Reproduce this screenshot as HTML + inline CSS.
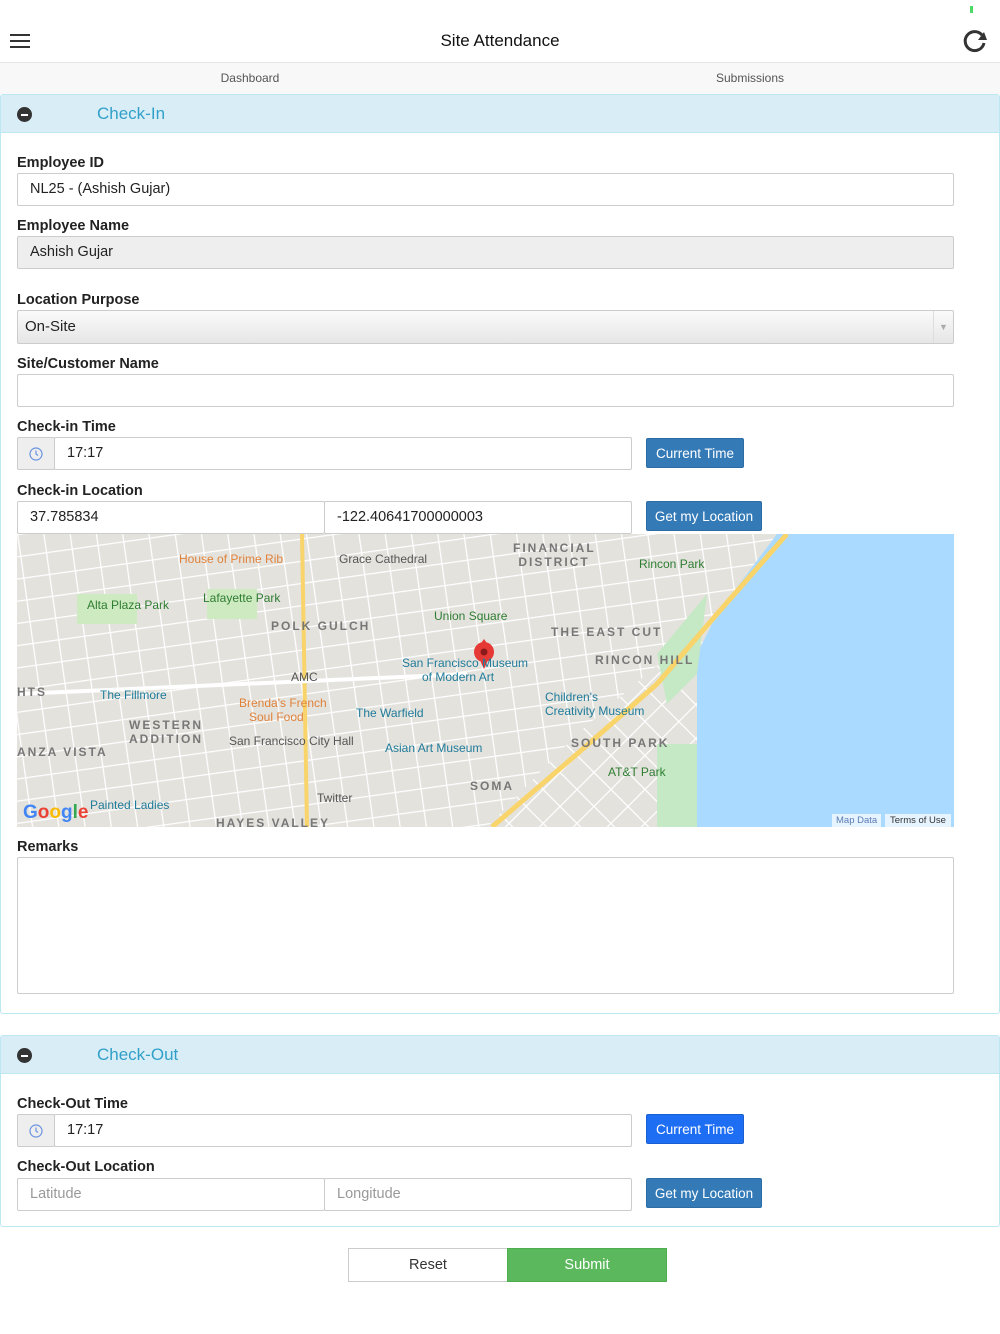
<!DOCTYPE html>
<html><head><meta charset="utf-8"><style>
*{box-sizing:border-box;margin:0;padding:0}
body{width:1000px;height:1334px;background:#fff;font-family:"Liberation Sans",sans-serif;position:relative;overflow:hidden;color:#333}
.a{position:absolute}
.lbl{position:absolute;left:17px;font-weight:bold;font-size:14.5px;color:#222}
.inp{position:absolute;height:33px;border:1px solid #ccc;background:#fff;font-size:14.5px;padding:0 12px;line-height:31px;color:#222;border-radius:2px}
.btn{position:absolute;height:30px;background:#337ab7;color:#fff;font-size:13.5px;text-align:center;line-height:30px;border-radius:2px;border:1px solid #2e6da4}
.panel{position:absolute;left:0;width:1000px;border:1px solid #bce8f1;border-radius:3px}
.ph{position:absolute;left:0;top:0;width:998px;height:38px;background:#d9edf7;border-bottom:1px solid #bce8f1}
.ph span{position:absolute;left:96px;top:9px;font-size:17px;color:#31a0c8}
.ph i{position:absolute;left:16px;top:12px;width:15px;height:15px;border-radius:50%;background:#333}
.ph i:after{content:"";position:absolute;left:4px;top:6.5px;width:7px;height:2px;background:#fff}
.ml{position:absolute;font-size:12px;color:#555}
</style></head><body>
<div class="a" style="left:970px;top:6px;width:3px;height:7px;background:#4cd964"></div>
<div class="a" style="left:10px;top:34px;width:20px;height:2px;background:#333"></div>
<div class="a" style="left:10px;top:40px;width:20px;height:2px;background:#333"></div>
<div class="a" style="left:10px;top:46px;width:20px;height:2px;background:#333"></div>
<div class="a" style="left:0;top:31px;width:1000px;text-align:center;font-size:17px;color:#111">Site Attendance</div>
<svg class="a" style="left:961px;top:28px" width="28" height="26" viewBox="0 0 28 26"><path d="M21 7 A9.5 9.5 0 1 0 23 15" fill="none" stroke="#333" stroke-width="3"/><path d="M17 12 L26 12 L23 4 Z" fill="#333"/></svg>
<div class="a" style="left:0;top:62px;width:1000px;height:32px;background:#f8f8f8;border-top:1px solid #e5e5e5"></div>
<div class="a" style="left:0;top:71px;width:500px;text-align:center;font-size:12px;color:#555">Dashboard</div>
<div class="a" style="left:500px;top:71px;width:500px;text-align:center;font-size:12px;color:#555">Submissions</div>

<div class="panel" style="top:94px;height:920px"><div class="ph"><i></i><span>Check-In</span></div></div>
<div class="lbl" style="top:155px">Employee ID</div>
<div class="inp" style="left:17px;top:173px;width:937px">NL25 - (Ashish Gujar)</div>
<div class="lbl" style="top:218px">Employee Name</div>
<div class="inp" style="left:17px;top:236px;width:937px;background:#eee">Ashish Gujar</div>
<div class="lbl" style="top:292px">Location Purpose</div>
<div class="inp" style="left:17px;top:310px;width:937px;background:linear-gradient(#fafafa,#e6e6e6);padding-left:7px;height:34px;line-height:32px;font-size:15px">On-Site<span style="position:absolute;right:0;top:0;width:20px;height:32px;border-left:1px solid #ddd;font-size:9px;color:#aaa;text-align:center">▼</span></div>
<div class="lbl" style="top:356px">Site/Customer Name</div>
<div class="inp" style="left:17px;top:374px;width:937px"></div>
<div class="lbl" style="top:419px">Check-in Time</div>
<div class="inp" style="left:17px;top:437px;width:38px;background:#eee;padding:0"><svg style="position:absolute;left:11px;top:9px" width="14" height="14"><circle cx="7" cy="7" r="6" fill="none" stroke="#6a93e0" stroke-width="1.2"/><path d="M7 3.5V7L9 8.5" stroke="#6a93e0" fill="none" stroke-width="1.2"/></svg></div>
<div class="inp" style="left:54px;top:437px;width:578px">17:17</div>
<div class="btn" style="left:646px;top:438px;width:98px">Current Time</div>
<div class="lbl" style="top:483px">Check-in Location</div>
<div class="inp" style="left:17px;top:501px;width:308px">37.785834</div>
<div class="inp" style="left:324px;top:501px;width:308px">-122.40641700000003</div>
<div class="btn" style="left:646px;top:501px;width:116px">Get my Location</div>

<div class="a" style="left:17px;top:534px;width:937px;height:293px;background:#ebe9e4;overflow:hidden">
<svg width="937" height="293" style="position:absolute;left:0;top:0">
<defs><pattern id="g" width="26" height="22" patternUnits="userSpaceOnUse" patternTransform="rotate(-8)"><rect width="26" height="22" fill="#e4e2dd"/><path d="M0 0H26M0 0V22" stroke="#fff" stroke-width="2.5"/></pattern>
<pattern id="g2" width="24" height="24" patternUnits="userSpaceOnUse" patternTransform="rotate(45)"><rect width="24" height="24" fill="#e4e2dd"/><path d="M0 0H24M0 0V24" stroke="#fff" stroke-width="2.5"/></pattern></defs>
<rect width="937" height="293" fill="url(#g)"/>
<polygon points="470,293 560,200 700,80 760,0 937,0 937,293" fill="url(#g2)"/>
<polygon points="680,293 680,120 700,80 760,0 937,0 937,293" fill="#aadaff"/>
<polygon points="640,120 690,60 680,140 650,170" fill="#c5e8c5"/>
<rect x="640" y="210" width="40" height="83" fill="#c5e8c5"/>
<path d="M475 293 L560 220 L640 150 L700 80 L770 0" stroke="#f8d46a" stroke-width="5" fill="none"/>
<path d="M285 0 L290 293" stroke="#f8d46a" stroke-width="4" fill="none"/>
<path d="M0 160 L450 140" stroke="#fff" stroke-width="4"/>
<rect x="60" y="60" width="60" height="30" fill="#cdeac0"/>
<rect x="190" y="55" width="50" height="30" fill="#cdeac0"/>
<path d="M467 105 q-10 12 0 30 q10 -18 0 -30z" fill="#e53935"/>
<circle cx="467" cy="118" r="10" fill="#e53935"/><circle cx="467" cy="118" r="3.5" fill="#8b1a1a"/>
</svg>
<span class="ml" style="left:162px;top:18px;color:#e0823a">House of Prime Rib</span>
<span class="ml" style="left:322px;top:18px">Grace Cathedral</span>
<span class="ml" style="left:496px;top:7px;letter-spacing:2px;font-weight:bold;color:#777">FINANCIAL<br>&nbsp;DISTRICT</span>
<span class="ml" style="left:622px;top:23px;color:#2e7d32">Rincon Park</span>
<span class="ml" style="left:70px;top:64px;color:#2e7d32">Alta Plaza Park</span>
<span class="ml" style="left:186px;top:57px;color:#2e7d32">Lafayette Park</span>
<span class="ml" style="left:254px;top:85px;letter-spacing:2px;font-weight:bold;color:#777">POLK GULCH</span>
<span class="ml" style="left:417px;top:75px;color:#2e7d32">Union Square</span>
<span class="ml" style="left:534px;top:91px;letter-spacing:2px;font-weight:bold;color:#777">THE EAST CUT</span>
<span class="ml" style="left:578px;top:119px;letter-spacing:2px;font-weight:bold;color:#777">RINCON HILL</span>
<span class="ml" style="left:385px;top:122px;color:#1f7b9a">San Francisco Museum<br>&nbsp;&nbsp;&nbsp;&nbsp;&nbsp;&nbsp;of Modern Art</span>
<span class="ml" style="left:274px;top:136px">AMC</span>
<span class="ml" style="left:0;top:151px;letter-spacing:2px;font-weight:bold;color:#777">HTS</span>
<span class="ml" style="left:83px;top:154px;color:#1f7b9a">The Fillmore</span>
<span class="ml" style="left:528px;top:156px;color:#1f7b9a">Children's<br>Creativity Museum</span>
<span class="ml" style="left:222px;top:162px;color:#e0823a">Brenda's French<br>&nbsp;&nbsp;&nbsp;Soul Food</span>
<span class="ml" style="left:339px;top:172px;color:#1f7b9a">The Warfield</span>
<span class="ml" style="left:112px;top:184px;letter-spacing:2px;font-weight:bold;color:#777">WESTERN<br>ADDITION</span>
<span class="ml" style="left:212px;top:200px">San Francisco City Hall</span>
<span class="ml" style="left:368px;top:207px;color:#1f7b9a">Asian Art Museum</span>
<span class="ml" style="left:554px;top:202px;letter-spacing:2px;font-weight:bold;color:#777">SOUTH PARK</span>
<span class="ml" style="left:0;top:211px;letter-spacing:2px;font-weight:bold;color:#777">ANZA VISTA</span>
<span class="ml" style="left:591px;top:231px;color:#2e7d32">AT&amp;T Park</span>
<span class="ml" style="left:453px;top:245px;letter-spacing:2px;font-weight:bold;color:#777">SOMA</span>
<span class="ml" style="left:300px;top:257px">Twitter</span>
<span class="ml" style="left:73px;top:264px;color:#1f7b9a">Painted Ladies</span>
<span class="ml" style="left:199px;top:282px;letter-spacing:2px;font-weight:bold;color:#777">HAYES VALLEY</span>
<span class="a" style="left:6px;top:268px;font-size:19px;font-weight:bold;color:#4285f4">G<span style="color:#ea4335">o</span><span style="color:#fbbc05">o</span>g<span style="color:#34a853">l</span><span style="color:#ea4335">e</span></span>
<span class="a" style="left:815px;top:280px;height:13px;background:rgba(255,255,255,.7);font-size:9.5px;color:#5b7bb5;padding:1px 4px">Map Data</span>
<span class="a" style="left:868px;top:280px;height:13px;background:rgba(255,255,255,.7);font-size:9.5px;color:#333;padding:1px 5px">Terms of Use</span>
</div>

<div class="lbl" style="top:839px">Remarks</div>
<div class="inp" style="left:17px;top:857px;width:937px;height:137px"></div>

<div class="panel" style="top:1035px;height:192px"><div class="ph"><i></i><span>Check-Out</span></div></div>
<div class="lbl" style="top:1096px">Check-Out Time</div>
<div class="inp" style="left:17px;top:1114px;width:38px;background:#eee;padding:0"><svg style="position:absolute;left:11px;top:9px" width="14" height="14"><circle cx="7" cy="7" r="6" fill="none" stroke="#6a93e0" stroke-width="1.2"/><path d="M7 3.5V7L9 8.5" stroke="#6a93e0" fill="none" stroke-width="1.2"/></svg></div>
<div class="inp" style="left:54px;top:1114px;width:578px">17:17</div>
<div class="btn" style="left:646px;top:1114px;width:98px;background:#1e6ef4;border-color:#1a5fd0">Current Time</div>
<div class="lbl" style="top:1159px">Check-Out Location</div>
<div class="inp" style="left:17px;top:1178px;width:308px;color:#999">Latitude</div>
<div class="inp" style="left:324px;top:1178px;width:308px;color:#999">Longitude</div>
<div class="btn" style="left:646px;top:1178px;width:116px">Get my Location</div>

<div class="a" style="left:348px;top:1248px;width:160px;height:34px;border:1px solid #ccc;text-align:center;line-height:32px;font-size:14.5px;color:#333">Reset</div>
<div class="a" style="left:507px;top:1248px;width:160px;height:34px;background:#5cb85c;border:1px solid #4cae4c;text-align:center;line-height:32px;font-size:14.5px;color:#fff">Submit</div>
</body></html>
